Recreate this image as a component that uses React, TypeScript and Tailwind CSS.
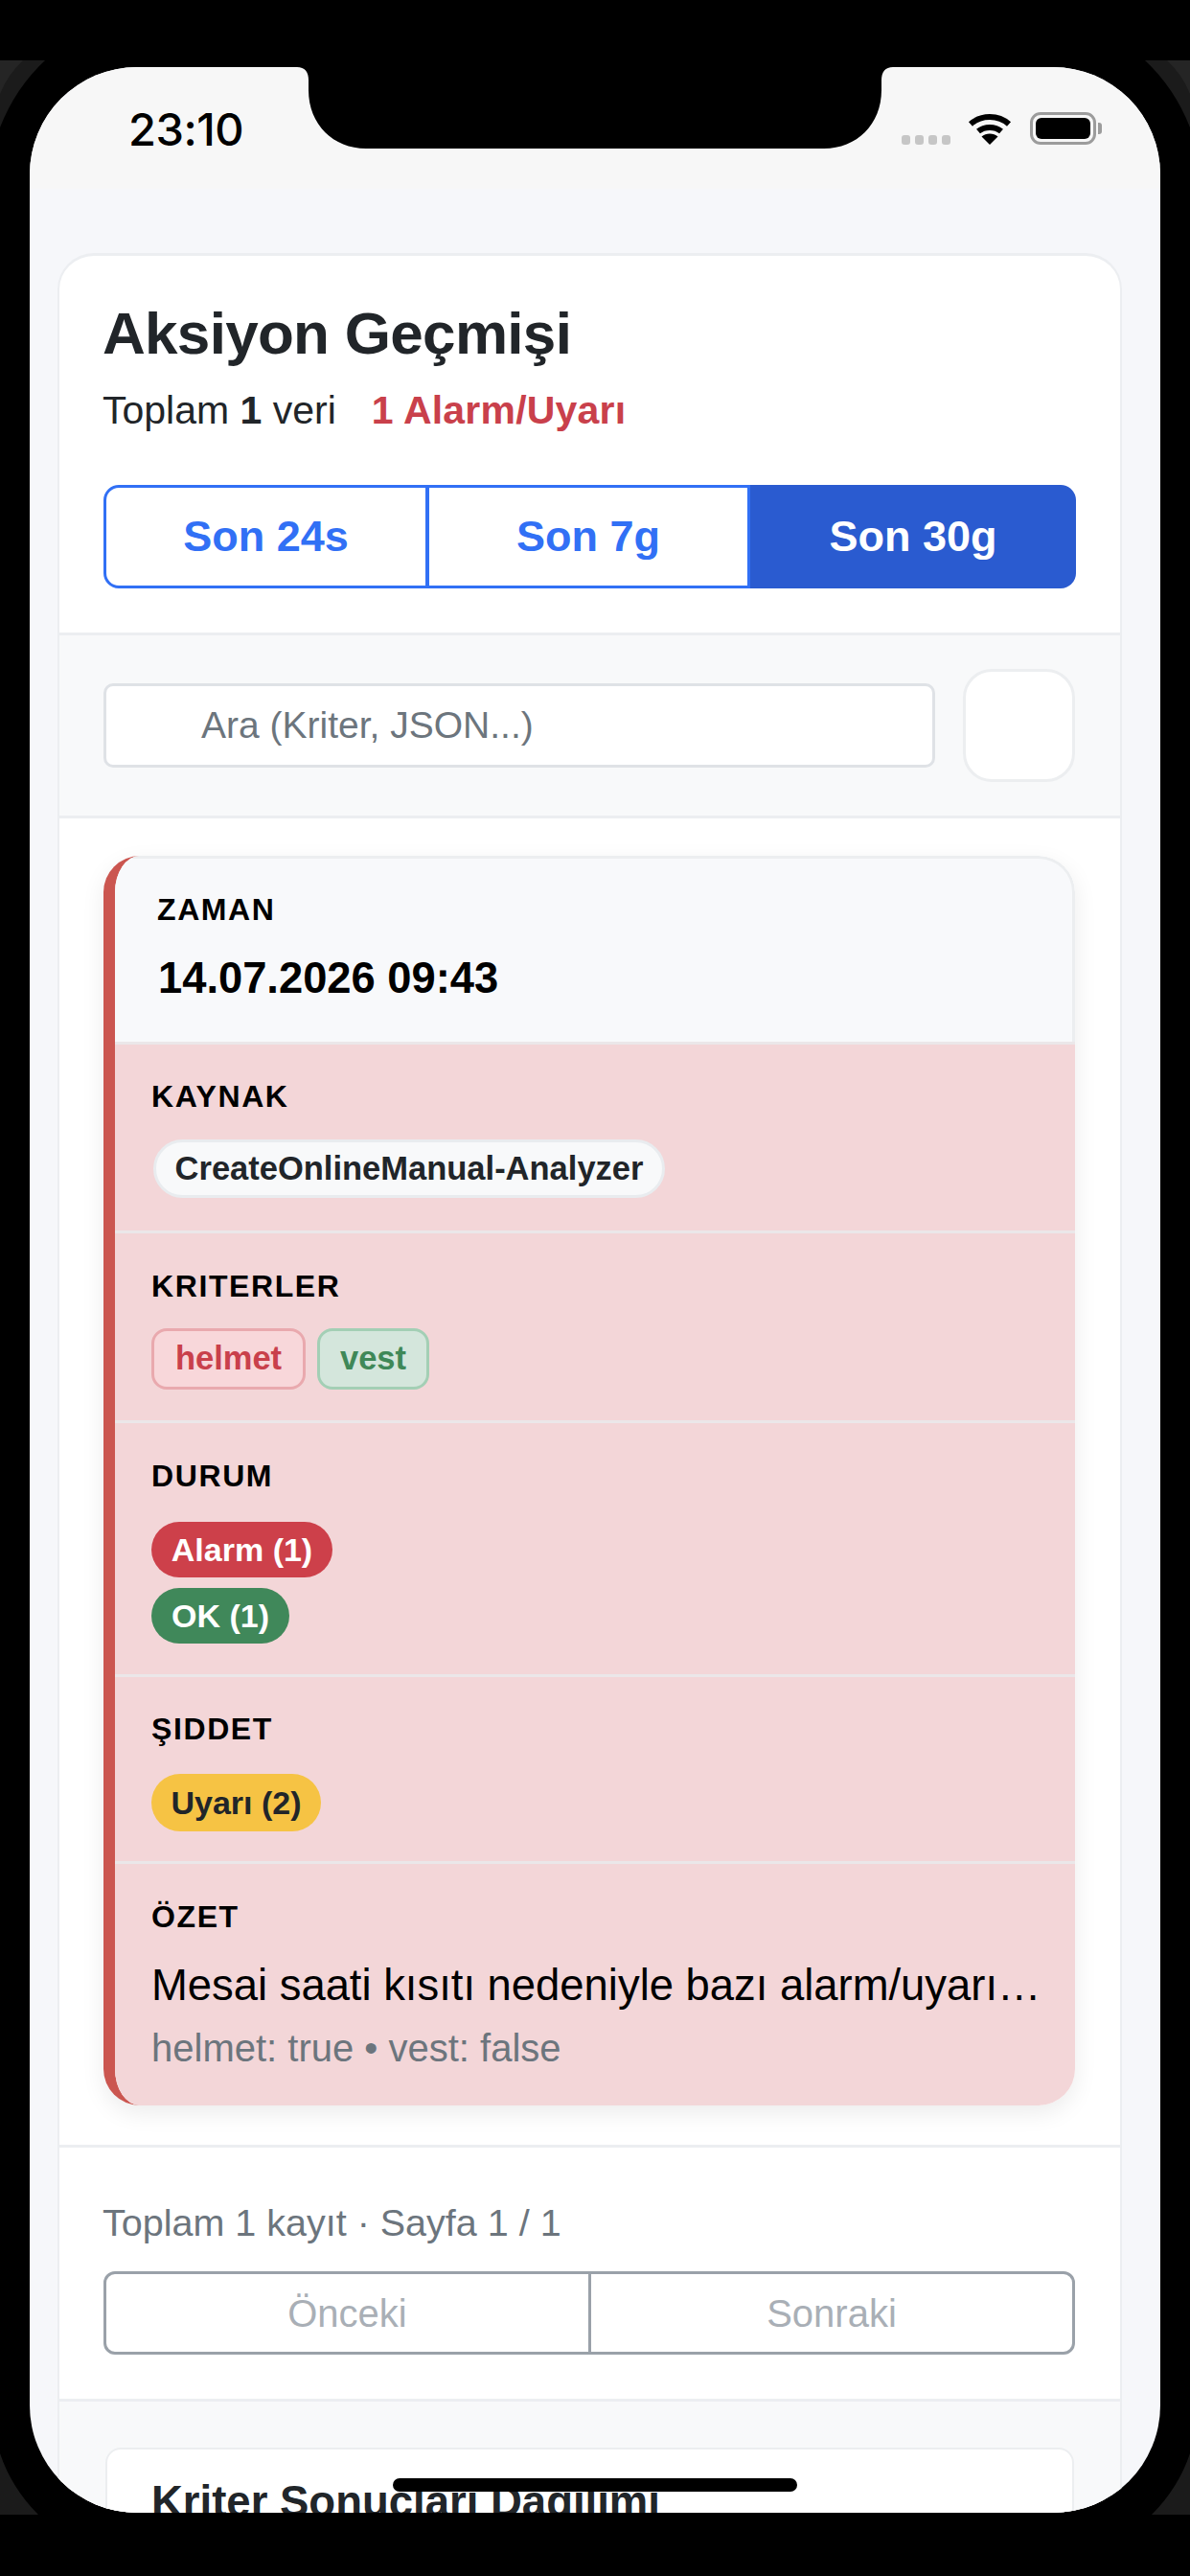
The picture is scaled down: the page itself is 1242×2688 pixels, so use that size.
import React from "react";

const FONT = "font-['Liberation_Sans',Arial,sans-serif]";

function Section({ label, className, children }: { label: string; className: string; children: React.ReactNode }) {
  return (
    <div className={`border-t-[3px] border-[#ebe7e9] bg-[#f3d6d8] pl-[38px] pr-[20px] ${className}`}>
      <div className="text-[32px] leading-[32px] font-bold tracking-[1.6px] text-black">{label}</div>
      {children}
    </div>
  );
}

function StatusIcons() {
  return (
    <div className="flex items-center">
      {/* signal dots */}
      <div className="mt-[24px] flex gap-[5px]">
        <span className="h-[10px] w-[9px] rounded-[3px] bg-[#c6c6c6]" />
        <span className="h-[10px] w-[9px] rounded-[3px] bg-[#c6c6c6]" />
        <span className="h-[10px] w-[9px] rounded-[3px] bg-[#c6c6c6]" />
        <span className="h-[10px] w-[9px] rounded-[3px] bg-[#c6c6c6]" />
      </div>
      <svg className="ml-[18px]" width="46" height="34" viewBox="0 0 46 34" fill="none">
        <path d="M3 12.5C14 2.5 32 2.5 43 12.5" stroke="#000" strokeWidth="6" />
        <path d="M11 20C17.5 14.5 28.5 14.5 35 20" stroke="#000" strokeWidth="6" />
        <path d="M23 34L14.5 25.5C19 21.5 27 21.5 31.5 25.5Z" fill="#000" />
      </svg>
      <div className="ml-[19px] flex items-center">
        <div className="flex h-[34px] w-[69px] rounded-[11px] border-[3px] border-[#9c9c9c] bg-[#f7f7f7] p-[3px]">
          <div className="flex-1 rounded-[6px] bg-black" />
        </div>
        <div className="ml-[2px] h-[12px] w-[4px] rounded-r-[3px] bg-[#9c9c9c]" />
      </div>
    </div>
  );
}

export default function App() {
  return (
    <div className={`relative h-[2688px] w-[1242px] overflow-hidden bg-black ${FONT}`}>
      {/* what shows of the device body at the corners */}
      <svg className="absolute left-0 top-0" width="1242" height="2688" viewBox="0 0 1242 2688">
        <path d="M0 63H47Q16 92 0 133Z" fill="#1b1b1b" />
        <path d="M0 63H24Q8 78 0 98Z" fill="#252525" />
        <path d="M1242 63H1195Q1226 92 1242 133Z" fill="#1b1b1b" />
        <path d="M1242 63H1218Q1234 78 1242 98Z" fill="#252525" />
        <path d="M0 2624H40Q12 2596 0 2560Z" fill="#1b1b1b" />
        <path d="M1242 2624H1202Q1230 2596 1242 2560Z" fill="#1b1b1b" />
      </svg>

      <div className="relative ml-[31px] mt-[70px] h-[2552px] w-[1180px] overflow-hidden rounded-[112px] bg-[#f6f7fa]">
        {/* status bar */}
        <div className="flex h-[127px] items-start justify-between bg-[#f7f7f7] pl-[103px] pr-[61px] pt-[47px]">
          <span className="font-['Inter',sans-serif] text-[47px] leading-[36px] font-medium tracking-[-0.5px] text-black">23:10</span>
          <StatusIcons />
        </div>

        {/* notch */}
        <svg className="absolute left-[279px] top-0" width="622" height="85" viewBox="0 0 622 85">
          <path d="M0 0Q12 0 12 14V24C12 60 38 85 72 85H550C584 85 610 60 610 24V14Q610 0 622 0Z" fill="#000" />
        </svg>

        {/* page card */}
        <div className="ml-[29px] mr-[40px] mt-[67px] rounded-t-[38px] border-x-[2px] border-t-[3px] border-[#eceef1] bg-white">
          <div className="border-b-[3px] border-[#eceef1] pb-[46px] pl-[45px] pr-[46px] pt-[51px]">
            <h1 className="text-[62px] leading-[60px] font-bold tracking-[-0.7px] text-[#212529]">Aksiyon Geçmişi</h1>
            <div className="mt-[25px] flex text-[41px] leading-[50px] text-[#212529]">
              <span>
                Toplam <b>1</b> veri
              </span>
              <span className="ml-[37px] font-bold tracking-[0.2px] text-[#c9404b]">1 Alarm/Uyarı</span>
            </div>
            <div className="ml-[1px] mt-[53px] flex h-[108px] text-[45px] font-bold">
              <button className="w-[339px] rounded-l-[16px] border-[3px] border-[#3170f5] bg-white text-[#3170f5]">Son 24s</button>
              <button className="-ml-[2px] w-[338px] border-[3px] border-[#3170f5] bg-white text-[#3170f5]">Son 7g</button>
              <button className="flex-1 rounded-r-[16px] bg-[#2a5bd0] text-white">Son 30g</button>
            </div>
          </div>

          {/* search row */}
          <div className="flex h-[191px] items-center gap-[29px] border-b-[3px] border-[#eceef1] bg-[#f8f9fa] pl-[46px] pr-[47px]">
            <div className="flex h-[88px] flex-1 items-center rounded-[10px] border-[3px] border-[#dfe2e6] bg-white pl-[99px] text-[39px] text-[#6c757d]">
              Ara (Kriter, JSON...)
            </div>
            <div className="h-[118px] w-[117px] rounded-[30px] border-[3px] border-[#eceef0] bg-white" />
          </div>

          {/* record */}
          <div className="pb-[41px] pl-[46px] pr-[47px] pt-[39px]">
            <div className="overflow-hidden rounded-[38px] border-l-[12px] border-[#cb5650] shadow-[0_8px_24px_rgba(0,0,0,0.08)]">
              <div className="h-[194px] rounded-tr-[38px] border-r-[3px] border-t-[3px] border-[#eceef0] bg-[#f8f9fb] pl-[45px] pt-[37px]">
                <div className="-ml-[1px] text-[32px] leading-[32px] font-bold tracking-[1.6px] text-black">ZAMAN</div>
                <div className="mt-[31px] text-[45.3px] leading-[50px] font-bold text-black">14.07.2026 09:43</div>
              </div>

              <Section label="KAYNAK" className="pb-[34px] pt-[38px]">
                <span className="ml-[2px] mt-[29px] flex h-[61px] w-[534px] items-center justify-center rounded-full border-[3px] border-[#e9ecef] bg-[#f8f9fa] text-[34.5px] font-bold text-[#212529]">
                  CreateOnlineManual-Analyzer
                </span>
              </Section>

              <Section label="KRITERLER" className="pb-[32px] pt-[39px]">
                <div className="mt-[28px] flex gap-[12px]">
                  <span className="flex h-[64px] w-[161px] items-center justify-center rounded-[16px] border-[3px] border-[#e9a9ae] bg-[#f8d7da] text-[34.5px] font-bold text-[#c9404b]">helmet</span>
                  <span className="flex h-[64px] w-[117px] items-center justify-center rounded-[16px] border-[3px] border-[#a3cfb5] bg-[#d4e6dc] text-[34.5px] font-bold text-[#3f8858]">vest</span>
                </div>
              </Section>

              <Section label="DURUM" className="pb-[32px] pt-[39px]">
                <div className="mt-[32px] flex flex-col items-start gap-[11px]">
                  <span className="flex h-[58px] w-[189px] items-center justify-center rounded-full bg-[#cd404a] text-[34px] font-bold text-white">Alarm (1)</span>
                  <span className="flex h-[58px] w-[144px] items-center justify-center rounded-full bg-[#40885a] text-[34px] font-bold text-white">OK (1)</span>
                </div>
              </Section>

              <Section label="ŞIDDET" className="pb-[31px] pt-[38px]">
                <span className="mt-[31px] flex h-[60px] w-[177px] items-center justify-center rounded-full bg-[#f6c344] text-[34px] font-bold text-[#212529]">Uyarı (2)</span>
              </Section>

              <Section label="ÖZET" className="pb-[38px] pt-[39px]">
                <div className="mt-[28px] truncate text-[45.4px] leading-[56px] text-black">Mesai saati kısıtı nedeniyle bazı alarm/uyarı…</div>
                <div className="mt-[15px] text-[40px] leading-[44px] text-[#6c757d]">helmet: true • vest: false</div>
              </Section>
            </div>
          </div>

          {/* pager */}
          <div className="border-t-[3px] border-[#eceef1] pb-[46px] pl-[46px] pr-[47px] pt-[53px]">
            <div className="-ml-[1px] text-[39.5px] leading-[50px] text-[#6c757d]">Toplam 1 kayıt · Sayfa 1 / 1</div>
            <div className="mt-[26px] flex h-[87px] text-[40px] text-[#a9afb6]">
              <button className="w-[509px] rounded-l-[12px] border-[3px] border-[#9aa1a9] bg-white">Önceki</button>
              <button className="-ml-[3px] flex-1 rounded-r-[12px] border-[3px] border-[#9aa1a9] bg-white">Sonraki</button>
            </div>
          </div>

          {/* chart card, cut off by the screen */}
          <div className="border-t-[3px] border-[#eceef1] bg-[#f8f9fa] pl-[48px] pr-[48px] pt-[48px]">
            <div className="h-[200px] rounded-[16px] border-[2px] border-[#eceef0] bg-white pl-[46px] pt-[30px]">
              <div className="text-[45.5px] leading-[50px] font-bold text-[#212529]">Kriter Sonuçları Dağılımı</div>
            </div>
          </div>
        </div>

        {/* home indicator */}
        <div className="absolute bottom-[22px] left-[379px] h-[14px] w-[422px] rounded-full bg-black" />
      </div>
    </div>
  );
}
